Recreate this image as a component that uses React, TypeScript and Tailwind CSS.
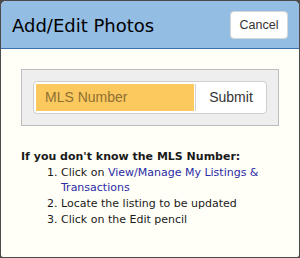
import React from "react";

export default function App() {
  return (
    <div className="w-[300px] h-[258px] bg-[#4b4b4b] p-[1px]">
      <div className="flex h-full flex-col overflow-hidden rounded-t-[5px] rounded-b-[2px] bg-[#fffff7]">
        {/* Header */}
        <div className="flex h-[48px] shrink-0 items-center justify-between border-b border-[#3c70b0] bg-[#94bde4] pl-[11px] pr-[11px] pt-[1px]">
          <h1 className="font-['DejaVu_Sans',sans-serif] text-[18px] text-black">Add/Edit Photos</h1>
          <button className="h-[28px] w-[58px] rounded-[4px] border border-[#d6d6d6] bg-white font-['Liberation_Sans',Arial,sans-serif] text-[12.5px] text-[#333]">
            Cancel
          </button>
        </div>

        {/* Body */}
        <div className="px-[20px] pt-[20px]">
          <div className="border border-[#bdbdbd] bg-[#eeeeee] p-[11px]">
            <div className="flex h-[33px] rounded-[4px] border border-[#cfcfcf] bg-white p-[2px] pr-0">
              <input
                placeholder="MLS Number"
                className="w-[158px] bg-[#fbc95d] px-[9px] font-['Liberation_Sans',Arial,sans-serif] text-[14px] text-[#333] outline-none placeholder:text-[#8f7033]"
              />
              <button className="ml-[1px] flex-1 border-l border-[#d0d0d0] font-['Liberation_Sans',Arial,sans-serif] text-[14px] text-[#333]">
                Submit
              </button>
            </div>
          </div>

          <div className="mt-[23px] font-['DejaVu_Sans',sans-serif] text-[11px] leading-[15.7px] text-[#1a1a1a]">
            <p className="font-bold">If you don't know the MLS Number:</p>
            <ol className="list-decimal pl-[40px]">
              <li>
                Click on <a className="text-[#2b2ba6]">View/Manage My Listings &amp; Transactions</a>
              </li>
              <li>Locate the listing to be updated</li>
              <li>Click on the Edit pencil</li>
            </ol>
          </div>
        </div>
      </div>
    </div>
  );
}
